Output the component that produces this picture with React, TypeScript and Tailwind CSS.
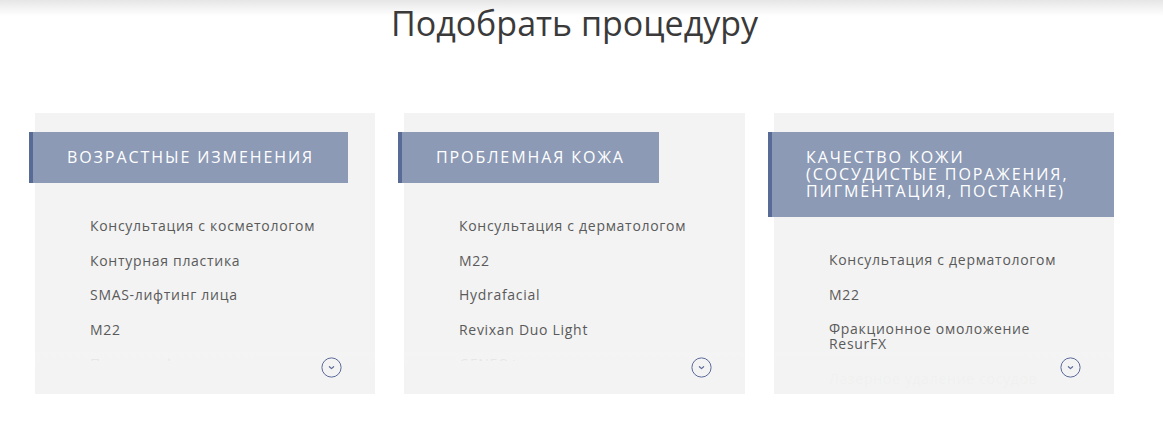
import React from "react";

type Card = { title: string; items: string[] };

const cards: Card[] = [
  {
    title: "ВОЗРАСТНЫЕ ИЗМЕНЕНИЯ",
    items: [
      "Консультация с косметологом",
      "Контурная пластика",
      "SMAS-лифтинг лица",
      "M22",
      "Плазмолифтинг",
      "Биоревитализация",
    ],
  },
  {
    title: "ПРОБЛЕМНАЯ КОЖА",
    items: [
      "Консультация с дерматологом",
      "M22",
      "Hydrafacial",
      "Revixan Duo Light",
      "GENEO+",
      "Пилинги",
    ],
  },
  {
    title: "КАЧЕСТВО КОЖИ (СОСУДИСТЫЕ ПОРАЖЕНИЯ, ПИГМЕНТАЦИЯ, ПОСТАКНЕ)",
    items: [
      "Консультация с дерматологом",
      "M22",
      "Фракционное омоложение ResurFX",
      "Лазерное удаление сосудов",
      "Пилинги",
    ],
  },
];

function Chevron() {
  return (
    <svg width="21" height="21" viewBox="0 0 21 21" fill="none">
      <circle cx="10.5" cy="10.5" r="9.6" stroke="#5b6a9a" strokeWidth="1" />
      <path d="M8.4 9.7 L10.5 11.6 L12.6 9.7" stroke="#5b6a9a" strokeWidth="1.2" strokeLinecap="round" strokeLinejoin="round" />
    </svg>
  );
}

function ProcCard({ card, wide }: { card: Card; wide?: boolean }) {
  return (
    <div className={`relative flex flex-col ${wide ? "w-[341px]" : "w-[340px]"} h-[281px] shrink-0 bg-[#f3f3f3] pt-[19px]`}>
      <div className="-ml-[6px] w-fit max-w-[346px] shrink-0 bg-[#8c9ab5] border-l-[4px] border-[#586a96] pl-[34px] pr-[34px] py-[17px] text-white text-[16px] leading-[17px] font-['Open_Sans',sans-serif] tracking-[0.12em]">
        {card.title}
      </div>
      <div className="mt-[35px] flex-1 min-h-0 max-h-[143px] overflow-hidden">
        <ul className="pl-[55px] pr-[45px] flex flex-col gap-[19.5px] text-[14px] leading-[15px] text-[#5a5a5a] font-['Open_Sans',sans-serif] tracking-[0.05em]">
          {card.items.map((it) => (
            <li key={it}>{it}</li>
          ))}
        </ul>
      </div>
      <div className="absolute left-0 right-0 bottom-0 h-[42px] bg-[linear-gradient(to_bottom,rgba(244,244,244,0.86),rgba(243,243,243,0.98)_40%)] flex items-start justify-end pr-[33px] pt-[5px]">
        <Chevron />
      </div>
    </div>
  );
}

export default function App() {
  return (
    <div className="w-full h-[421px] bg-[linear-gradient(to_bottom,#e6e6e6_0px,#ffffff_16px)] overflow-hidden">
      <div className="w-[1149px]">
        <h1 className="text-center text-[#3a3a3a] text-[34px] leading-[46px] font-normal font-['Open_Sans',sans-serif]">
          Подобрать процедуру
        </h1>
        <div className="flex gap-[29px] pl-[35px] mt-[67px]">
          {cards.map((c, i) => (
            <ProcCard key={c.title} card={c} wide={i === 1} />
          ))}
        </div>
      </div>
    </div>
  );
}
